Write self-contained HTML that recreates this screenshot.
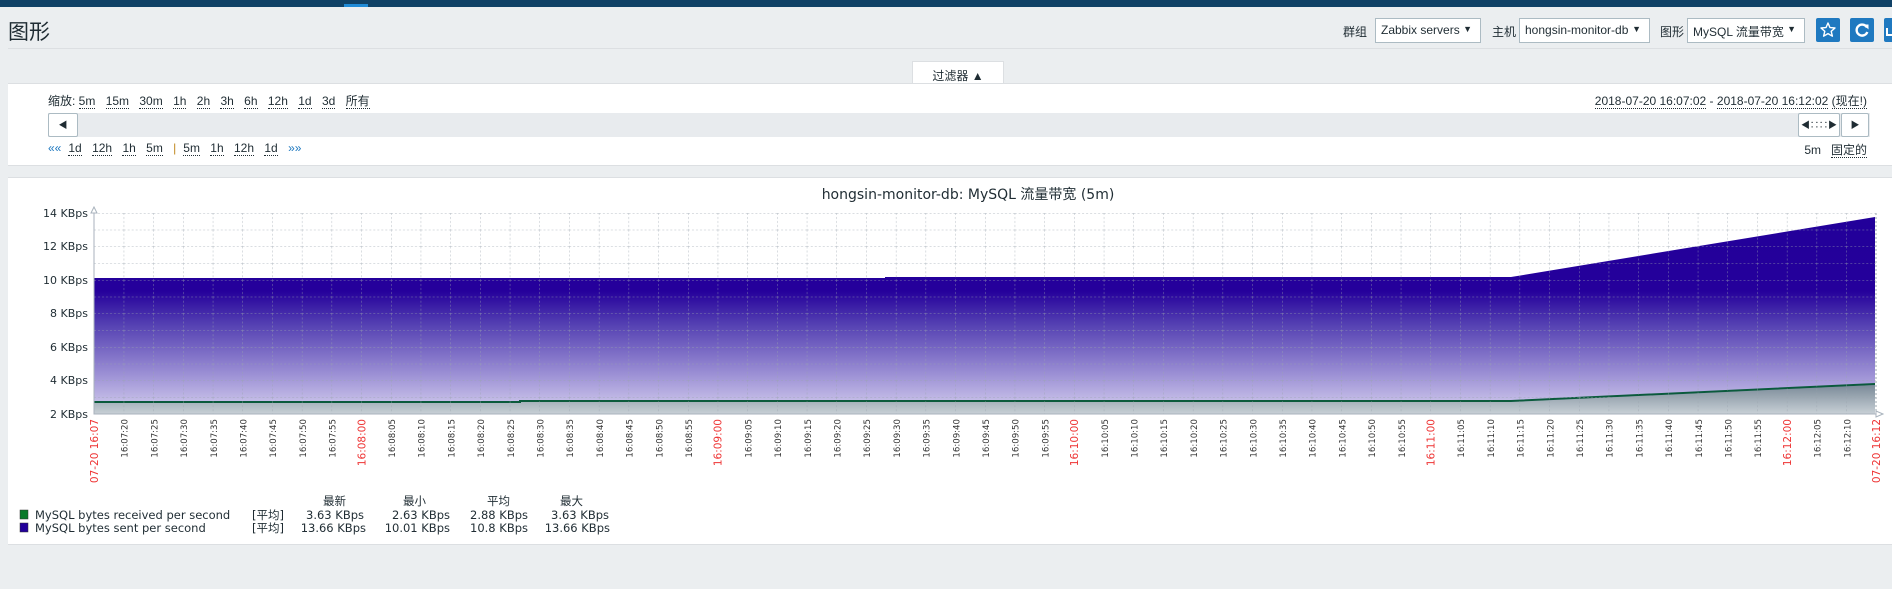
<!DOCTYPE html>
<html><head><meta charset="utf-8">
<style>
*{margin:0;padding:0;box-sizing:border-box}
body{width:1892px;height:589px;overflow:hidden;background:#ebeef0;font-family:"Liberation Sans","Noto Sans CJK SC",sans-serif;font-size:12px;color:#1f2c33;position:relative}
.abs{position:absolute}
.topbar{left:0;top:0;width:1892px;height:7px;background:#0f4166}
.hl{left:344px;top:4px;width:24px;height:3px;background:#1f8ad6}
.title{left:8px;top:16px;font-size:21px;color:#1f2c33;font-family:"Liberation Sans","Noto Sans CJK SC",sans-serif}
.sep{left:8px;top:48px;width:1884px;height:1px;background:#dcdfe2}
.sel{height:25px;top:18px;background:#fff;border:1px solid #acbbc3;padding:4px 5px;font-size:12px;white-space:nowrap}
.sel span{position:absolute;right:8px;top:5px;font-size:9px}
.lbl{top:23px;font-size:12px}
.btn{top:18px;width:24px;height:24px;background:#1f79c0;border-radius:2px}
.panel{background:#fff;left:8px;width:1884px;border-top:1px solid #dcdfe2;border-bottom:1px solid #dcdfe2}
.tab{left:912px;top:61px;width:92px;height:23px;background:#fff;border:1px solid #dcdfe2;border-bottom:none;text-align:center;padding-top:5px;font-size:12px}
a{color:#1f2c33;text-decoration:none;border-bottom:1px dotted #1f2c33}
.row{white-space:nowrap;font-size:12px}
.row a,.row b{margin-right:7px;font-weight:normal}
.bar{left:48px;top:113px;width:1822px;height:24px;background:#e8ebee}
.tb{background:#fff;border:1px solid #acbbc3;height:24px;border-radius:2px;font-size:9px;text-align:center;line-height:22px}
</style></head><body>
<div class="abs topbar"></div><div class="abs hl"></div>
<div class="abs title">图形</div>
<div class="abs sep"></div>
<div class="abs lbl" style="left:1343px">群组</div>
<div class="abs sel" style="left:1375px;width:106px">Zabbix servers<span>▼</span></div>
<div class="abs lbl" style="left:1492px">主机</div>
<div class="abs sel" style="left:1519px;width:131px">hongsin-monitor-db<span>▼</span></div>
<div class="abs lbl" style="left:1660px">图形</div>
<div class="abs sel" style="left:1687px;width:118px">MySQL 流量带宽<span>▼</span></div>
<div class="abs btn" style="left:1816px"><svg width="24" height="24"><path d="M12 5l2 4.6 5 .4-3.8 3.3 1.2 4.9L12 15.6 7.6 18.2l1.2-4.9L5 10l5-.4z" fill="none" stroke="#fff" stroke-width="1.4" stroke-linejoin="round"/></svg></div>
<div class="abs btn" style="left:1850px"><svg width="24" height="24"><path d="M17 9.5A5.5 5.5 0 1 0 17.3 14" fill="none" stroke="#fff" stroke-width="2.4"/><path d="M13.5 6.5h5v5z" fill="#fff"/></svg></div>
<div class="abs btn" style="left:1884px"><svg width="8" height="24"><path d="M3 10v7h5" fill="none" stroke="#fff" stroke-width="2"/></svg></div>

<div class="abs tab">过滤器 ▲</div>
<div class="abs panel" style="top:83px;height:83px"></div>
<div class="abs row" style="left:48px;top:92px">缩放: <a>5m</a> <a>15m</a> <a>30m</a> <a>1h</a> <a>2h</a> <a>3h</a> <a>6h</a> <a>12h</a> <a>1d</a> <a>3d</a> <a>所有</a></div>
<div class="abs bar"></div>
<div class="abs tb" style="left:48px;top:113px;width:30px">◀</div>
<div class="abs tb" style="left:1798px;top:113px;width:42px">◀∷∷▶</div>
<div class="abs tb" style="left:1841px;top:113px;width:28px">▶</div>
<div class="abs row" style="right:25px;top:92px"><a style="margin:0">2018-07-20 16:07:02</a> - <a style="margin:0">2018-07-20 16:12:02</a> <a style="margin:0">(现在!)</a></div>
<div class="abs row" style="left:48px;top:141px"><span style="color:#1f79c0;margin-right:7px">««</span><a>1d</a> <a>12h</a> <a>1h</a> <a>5m</a> <span style="color:#c0881f;margin-right:7px">|</span><a>5m</a> <a>1h</a> <a>12h</a> <a>1d</a> <span style="color:#1f79c0">»»</span></div>
<div class="abs row" style="right:25px;top:141px">5m&nbsp;&nbsp; <a style="margin:0">固定的</a></div>

<div class="abs panel" style="top:177px;height:368px"></div>
<svg class="abs" style="left:0;top:0" width="1892" height="589" font-family="DejaVu Sans,Liberation Sans,Noto Sans CJK SC,sans-serif">
<defs>
<linearGradient id="gs" gradientUnits="userSpaceOnUse" x1="0" y1="217" x2="0" y2="412">
<stop offset="0" stop-color="#22009a"/><stop offset="0.38" stop-color="#25009b"/><stop offset="0.55" stop-color="#5440b2"/><stop offset="0.8" stop-color="#9a8ed4"/><stop offset="1" stop-color="#d4ceee"/></linearGradient>
<linearGradient id="gg" gradientUnits="userSpaceOnUse" x1="0" y1="385" x2="0" y2="414">
<stop offset="0" stop-color="#7a8a98"/><stop offset="1" stop-color="#c8d0d6"/></linearGradient>
<pattern id="grid" patternUnits="userSpaceOnUse" x="94" y="213" width="29.7" height="16.75">
<path d="M0 0V16.75M0 0H29.7" stroke="#9aa4ae" stroke-width="1" stroke-dasharray="2,2" fill="none"/></pattern>
</defs>
<text x="968" y="199" font-size="14" text-anchor="middle" fill="#1f2c33">hongsin-monitor-db: MySQL 流量带宽 (5m)</text>
<polygon points="94,278 885,278 885,277 1511,277 1875,217 1875,414 94,414" fill="url(#gs)"/>
<polygon points="94,402 1511,402 1875,385 1875,414 94,414" fill="url(#gg)"/>
<polyline points="94,402 520,402 520,401 1511,401 1875,384" fill="none" stroke="#0b5a3c" stroke-width="2"/>
<rect x="94" y="213" width="1782" height="201" fill="url(#grid)" opacity="0.75"/>
<path d="M1876 213V414" stroke="#9aa4ae" stroke-dasharray="2,2"/>
<path d="M94 208V414H1882" stroke="#a8b2bc" fill="none"/>
<path d="M91 213l3-6 3 6zM1876 411l7 3-7 3z" fill="#fff" stroke="#a8b2bc"/>
<g font-size="11" fill="#1f2c33" text-anchor="end">
<text x="88" y="217">14 KBps</text><text x="88" y="250">12 KBps</text><text x="88" y="284">10 KBps</text><text x="88" y="317">8 KBps</text><text x="88" y="351">6 KBps</text><text x="88" y="384">4 KBps</text><text x="88" y="418">2 KBps</text>
</g>
<g font-size="8.6" fill="#333" text-anchor="end">
<text transform="translate(98,419) rotate(-90)" fill="#e33" font-size="10.5">07-20 16:07</text>
<text transform="translate(127.7,419) rotate(-90)">16:07:20</text>
<text transform="translate(157.4,419) rotate(-90)">16:07:25</text>
<text transform="translate(187.1,419) rotate(-90)">16:07:30</text>
<text transform="translate(216.8,419) rotate(-90)">16:07:35</text>
<text transform="translate(246.5,419) rotate(-90)">16:07:40</text>
<text transform="translate(276.2,419) rotate(-90)">16:07:45</text>
<text transform="translate(305.9,419) rotate(-90)">16:07:50</text>
<text transform="translate(335.6,419) rotate(-90)">16:07:55</text>
<text transform="translate(365.3,419) rotate(-90)" fill="#e33" font-size="10.5">16:08:00</text>
<text transform="translate(395,419) rotate(-90)">16:08:05</text>
<text transform="translate(424.7,419) rotate(-90)">16:08:10</text>
<text transform="translate(454.4,419) rotate(-90)">16:08:15</text>
<text transform="translate(484.1,419) rotate(-90)">16:08:20</text>
<text transform="translate(513.8,419) rotate(-90)">16:08:25</text>
<text transform="translate(543.5,419) rotate(-90)">16:08:30</text>
<text transform="translate(573.2,419) rotate(-90)">16:08:35</text>
<text transform="translate(602.9,419) rotate(-90)">16:08:40</text>
<text transform="translate(632.6,419) rotate(-90)">16:08:45</text>
<text transform="translate(662.3,419) rotate(-90)">16:08:50</text>
<text transform="translate(692,419) rotate(-90)">16:08:55</text>
<text transform="translate(721.7,419) rotate(-90)" fill="#e33" font-size="10.5">16:09:00</text>
<text transform="translate(751.4,419) rotate(-90)">16:09:05</text>
<text transform="translate(781.1,419) rotate(-90)">16:09:10</text>
<text transform="translate(810.8,419) rotate(-90)">16:09:15</text>
<text transform="translate(840.5,419) rotate(-90)">16:09:20</text>
<text transform="translate(870.2,419) rotate(-90)">16:09:25</text>
<text transform="translate(899.9,419) rotate(-90)">16:09:30</text>
<text transform="translate(929.6,419) rotate(-90)">16:09:35</text>
<text transform="translate(959.3,419) rotate(-90)">16:09:40</text>
<text transform="translate(989,419) rotate(-90)">16:09:45</text>
<text transform="translate(1018.7,419) rotate(-90)">16:09:50</text>
<text transform="translate(1048.4,419) rotate(-90)">16:09:55</text>
<text transform="translate(1078.1,419) rotate(-90)" fill="#e33" font-size="10.5">16:10:00</text>
<text transform="translate(1107.8,419) rotate(-90)">16:10:05</text>
<text transform="translate(1137.5,419) rotate(-90)">16:10:10</text>
<text transform="translate(1167.2,419) rotate(-90)">16:10:15</text>
<text transform="translate(1196.9,419) rotate(-90)">16:10:20</text>
<text transform="translate(1226.6,419) rotate(-90)">16:10:25</text>
<text transform="translate(1256.3,419) rotate(-90)">16:10:30</text>
<text transform="translate(1286,419) rotate(-90)">16:10:35</text>
<text transform="translate(1315.7,419) rotate(-90)">16:10:40</text>
<text transform="translate(1345.4,419) rotate(-90)">16:10:45</text>
<text transform="translate(1375.1,419) rotate(-90)">16:10:50</text>
<text transform="translate(1404.8,419) rotate(-90)">16:10:55</text>
<text transform="translate(1434.5,419) rotate(-90)" fill="#e33" font-size="10.5">16:11:00</text>
<text transform="translate(1464.2,419) rotate(-90)">16:11:05</text>
<text transform="translate(1493.9,419) rotate(-90)">16:11:10</text>
<text transform="translate(1523.6,419) rotate(-90)">16:11:15</text>
<text transform="translate(1553.3,419) rotate(-90)">16:11:20</text>
<text transform="translate(1583,419) rotate(-90)">16:11:25</text>
<text transform="translate(1612.7,419) rotate(-90)">16:11:30</text>
<text transform="translate(1642.4,419) rotate(-90)">16:11:35</text>
<text transform="translate(1672.1,419) rotate(-90)">16:11:40</text>
<text transform="translate(1701.8,419) rotate(-90)">16:11:45</text>
<text transform="translate(1731.5,419) rotate(-90)">16:11:50</text>
<text transform="translate(1761.2,419) rotate(-90)">16:11:55</text>
<text transform="translate(1790.9,419) rotate(-90)" fill="#e33" font-size="10.5">16:12:00</text>
<text transform="translate(1820.6,419) rotate(-90)">16:12:05</text>
<text transform="translate(1850.3,419) rotate(-90)">16:12:10</text>
<text transform="translate(1880,419) rotate(-90)" fill="#e33" font-size="10.5">07-20 16:12</text>
</g>
<g font-size="11.5" fill="#1f2c33">
<rect x="20" y="510" width="8" height="9" fill="#0a7a2a" stroke="#333" stroke-width="0.5"/>
<rect x="20" y="523" width="8" height="9" fill="#22009a" stroke="#333" stroke-width="0.5"/>
<text x="35" y="519">MySQL bytes received per second</text>
<text x="35" y="532">MySQL bytes sent per second</text>
<text x="252" y="519">[平均]</text><text x="252" y="532">[平均]</text>
<g text-anchor="end">
<text x="346" y="505">最新</text><text x="426" y="505">最小</text><text x="510" y="505">平均</text><text x="583" y="505">最大</text>
<text x="364" y="519">3.63 KBps</text><text x="450" y="519">2.63 KBps</text><text x="528" y="519">2.88 KBps</text><text x="609" y="519">3.63 KBps</text>
<text x="366" y="532">13.66 KBps</text><text x="450" y="532">10.01 KBps</text><text x="528" y="532">10.8 KBps</text><text x="610" y="532">13.66 KBps</text>
</g></g>
</svg>
</body></html>
